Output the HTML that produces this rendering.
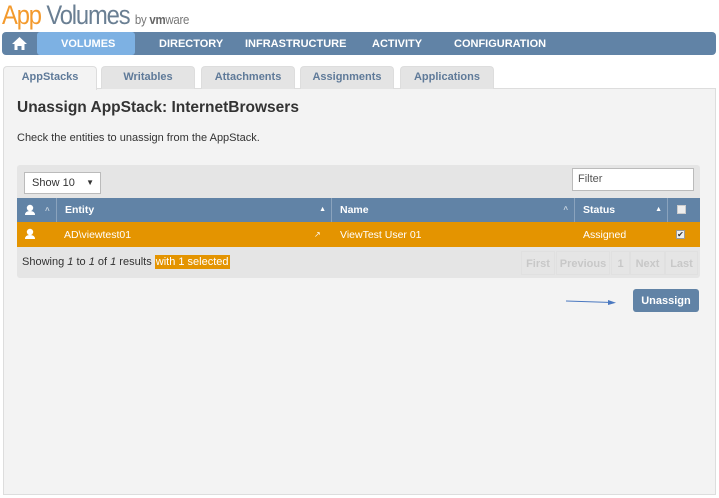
<!DOCTYPE html>
<html><head><meta charset="utf-8"><style>
*{box-sizing:border-box;margin:0;padding:0}
body{width:719px;height:498px;background:#fff;font-family:"Liberation Sans",sans-serif;position:relative;overflow:hidden;color:#333}
.abs{position:absolute}
.nav{left:2px;top:32px;width:714px;height:23px;background:#6183a6;border-radius:4px}
.nav span{position:absolute;top:6px;line-height:12px;color:#fff;font-weight:bold;font-size:11px}
.tab{position:absolute;top:66px;height:23px;background:#e4e4e4;border:1px solid #ddd;border-bottom:none;border-radius:4px 4px 0 0;text-align:center;line-height:21px;font-size:11px;font-weight:bold;color:#5f7a99}
.panel{left:3px;top:88px;width:713px;height:407px;background:#f3f3f3;border:1px solid #ddd}
.hdr{position:absolute;top:198px;height:24px;background:#6183a6;color:#fff;font-weight:bold;font-size:10.5px;line-height:24px;border-right:1px solid #8aa3bd}
.row{position:absolute;top:222px;height:25px;background:#e49400;color:#fff;font-size:10.5px;line-height:26px}
.pg{position:absolute;top:251px;height:24px;line-height:24px;font-size:11px;color:#c8c8c8;font-weight:bold;text-align:center;border:1px solid #e0e0e0}
</style></head><body>
<div class="abs" style="left:2px;top:0;font-size:27px;line-height:30px;letter-spacing:-1.3px;transform:scaleX(0.88);transform-origin:0 0;white-space:nowrap"><span style="color:#f39a2d">App</span> <span style="color:#6a7f93">Volumes</span> <span style="font-size:13px;color:#777;letter-spacing:-0.3px">by <b style="color:#666">vm</b>ware</span></div>
<div class="abs nav">
<div class="abs" style="left:0;top:0;width:35px;height:23px">
<svg width="35" height="23"><path d="M10 12 L17.5 5 L25 12 L22.5 12 L22.5 18 L19.5 18 L19.5 14 L15.5 14 L15.5 18 L12.5 18 L12.5 12 Z" fill="#fff"/></svg></div>
<div class="abs" style="left:35px;top:0;width:98px;height:23px;background:#7db1e3;border-radius:3px"></div>
<span style="left:59px">VOLUMES</span>
<span style="left:157px">DIRECTORY</span>
<span style="left:243px">INFRASTRUCTURE</span>
<span style="left:370px">ACTIVITY</span>
<span style="left:452px">CONFIGURATION</span>
</div>
<div class="abs panel"></div>
<div class="tab" style="left:3px;width:94px;background:#f3f3f3;height:24px">AppStacks</div>
<div class="tab" style="left:101px;width:94px">Writables</div>
<div class="tab" style="left:201px;width:94px">Attachments</div>
<div class="tab" style="left:300px;width:94px">Assignments</div>
<div class="tab" style="left:400px;width:94px">Applications</div>
<div class="abs" style="left:17px;top:99px;font-size:15.5px;font-weight:bold;color:#333">Unassign AppStack: InternetBrowsers</div>
<div class="abs" style="left:17px;top:132px;font-size:11px;color:#333">Check the entities to unassign from the AppStack.</div>
<div class="abs" style="left:17px;top:165px;width:683px;height:113px;background:#e5e5e5;border-radius:3px"></div>
<div class="abs" style="left:24px;top:172px;width:77px;height:22px;background:#fff;border:1px solid #bbb;font-size:11px;line-height:20px;padding-left:7px">Show 10<span style="position:absolute;right:6px;font-size:8px">▼</span></div>
<div class="abs" style="left:572px;top:168px;width:122px;height:23px;background:#fff;border:1px solid #bbb;font-size:11px;line-height:21px;padding-left:5px;color:#555">Filter</div>
<div class="hdr" style="left:17px;width:40px"><svg width="40" height="24" style="position:absolute;left:0;top:0"><circle cx="13" cy="10" r="3.2" fill="#fff"/><path d="M8 17 Q8 13 13 13 Q18 13 18 17 Z" fill="#fff"/><text x="28" y="15" font-size="8" fill="#c8d4e0">^</text></svg></div>
<div class="hdr" style="left:57px;width:275px;padding-left:8px">Entity<span style="position:absolute;right:5px;font-size:7px">▲</span></div>
<div class="hdr" style="left:332px;width:243px;padding-left:8px">Name<span style="position:absolute;right:6px;font-size:8px;color:#c8d4e0">^</span></div>
<div class="hdr" style="left:575px;width:93px;padding-left:8px">Status<span style="position:absolute;right:5px;font-size:7px">▲</span></div>
<div class="hdr" style="left:668px;width:32px;border-right:none"><div style="position:absolute;left:9px;top:7px;width:9px;height:9px;background:#eee;border:1px solid #ccc"></div></div>
<div class="row" style="left:17px;width:683px">
<svg width="40" height="25" style="position:absolute;left:0;top:0"><circle cx="13" cy="10" r="3.2" fill="#fff"/><path d="M8 17 Q8 13 13 13 Q18 13 18 17 Z" fill="#fff"/></svg>
<span style="position:absolute;left:47px">AD\viewtest01</span>
<span style="position:absolute;left:297px;font-size:8px">↗</span>
<span style="position:absolute;left:323px">ViewTest User 01</span>
<span style="position:absolute;left:566px">Assigned</span>
<div style="position:absolute;left:659px;top:8px;width:9px;height:9px;background:#eee;border:1px solid #999;font-size:8px;line-height:7px;color:#333;text-align:center">✔</div>
</div>
<div class="abs" style="left:22px;top:256px;font-size:11px;color:#333">Showing <i>1</i> to <i>1</i> of <i>1</i> results <span style="background:#e49400;color:#fff;padding:1px 1px">with 1 selected</span></div>
<div class="pg" style="left:521px;width:34px">First</div>
<div class="pg" style="left:556px;width:54px">Previous</div>
<div class="pg" style="left:611px;width:19px">1</div>
<div class="pg" style="left:630px;width:35px">Next</div>
<div class="pg" style="left:665px;width:33px">Last</div>
<svg class="abs" style="left:560px;top:296px" width="60" height="12"><line x1="6" y1="5" x2="52" y2="6.5" stroke="#4a78c0" stroke-width="1"/><path d="M48 4 L56 6.7 L48 9 Z" fill="#4a78c0"/></svg>
<div class="abs" style="left:633px;top:289px;width:66px;height:23px;background:#6183a6;border-radius:3px;color:#fff;font-weight:bold;font-size:11px;display:flex;align-items:center;justify-content:center">Unassign</div>
</body></html>
